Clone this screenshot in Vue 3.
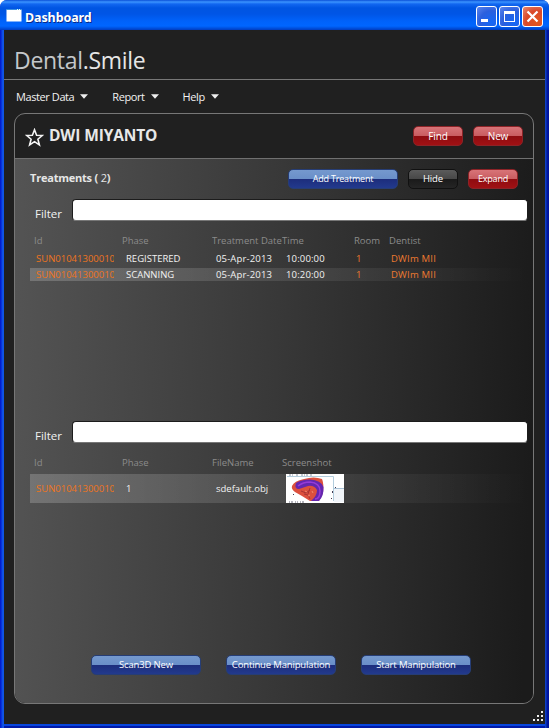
<script setup>
const menus = ['Master Data', 'Report', 'Help']
const treatments = [
  { id: 'SUN01041300010', phase: 'REGISTERED', date: '05-Apr-2013', time: '10:00:00', room: '1', dentist: 'DWIm MII' },
  { id: 'SUN01041300010', phase: 'SCANNING', date: '05-Apr-2013', time: '10:20:00', room: '1', dentist: 'DWIm MII' },
]
const actions = ['Scan3D New', 'Continue Manipulation', 'Start Manipulation']
</script>

<template>
  <div class="window">
    <header class="titlebar">
      <svg class="app-icon" width="16" height="13" viewBox="0 0 16 13">
        <rect x="0.5" y="1" width="15" height="11.5" fill="#fff" />
        <path d="M0 .5H16" stroke="#3b8fe0" />
        <path d="M11 .5h1M13 .5h1" stroke="#dff" />
      </svg>
      <span class="title">Dashboard</span>
      <div class="controls">
        <span class="ctl"><svg width="21" height="21"><rect x="5" y="13" width="7" height="3" fill="#fff" /></svg></span>
        <span class="ctl"><svg width="21" height="21"><path d="M5 5h11v11H5zM6 8h9v7H6z" fill="#fff" fill-rule="evenodd" /></svg></span>
        <span class="ctl close"><svg width="21" height="21"><path d="M5.5 5.5l10 10M15.5 5.5l-10 10" stroke="#fff" stroke-width="2.2" /></svg></span>
      </div>
    </header>

    <div class="client">
      <div class="brand"><span class="brand-a">Dental</span>.Smile</div>
      <nav class="menu">
        <span v-for="m in menus" :key="m" class="menu-item">
          {{ m }}
          <svg width="8" height="5" viewBox="0 0 8 5"><path d="M0 .3h8L4 4.7z" fill="#eee" /></svg>
        </span>
      </nav>

      <main class="panel">
        <div class="patient">
          <svg class="star" width="19" height="19" viewBox="0 0 19 19">
            <path d="M9.5 1.8L11.600 7.200L17.300 7.500L12.900 11.200L14.400 17L9.500 13.700L4.600 17L6.100 11.200L1.700 7.500L7.400 7.200Z" fill="none" stroke="#f4f4f4" stroke-width="1.6" />
          </svg>
          <h1>DWI MIYANTO</h1>
          <button class="btn red">Find</button>
          <button class="btn red last">New</button>
        </div>

        <div class="content">
          <div class="toolbar">
            <h2>Treatments ( <span>2</span>)</h2>
            <button class="btn blue add">Add Treatment</button>
            <button class="btn dark">Hide</button>
            <button class="btn red expand">Expand</button>
          </div>

          <section class="block">
            <label class="filter"><span>Filter</span><input type="text" /></label>
            <div class="cols head">
              <span>Id</span><span>Phase</span><span>Treatment Date</span><span>Time</span><span>Room</span><span>Dentist</span>
            </div>
            <div v-for="(t, i) in treatments" :key="i" class="cols row" :class="{ selected: i === 1 }">
              <span class="id">{{ t.id }}</span><span>{{ t.phase }}</span><span class="date">{{ t.date }}</span><span class="time">{{ t.time }}</span><span class="link">{{ t.room }}</span><span class="link dentist">{{ t.dentist }}</span>
            </div>
          </section>

          <section class="block">
            <label class="filter"><span>Filter</span><input type="text" /></label>
            <div class="cols head">
              <span>Id</span><span>Phase</span><span>FileName</span><span>Screenshot</span>
            </div>
            <div class="cols row selected tall">
              <span class="id">SUN01041300010</span><span>1</span><span class="file">sdefault.obj</span>
              <svg width="58" height="29" viewBox="0 0 58 29">
                <rect width="58" height="29" fill="#fff" />
                <path d="M1 2.500H47.500V27" fill="none" stroke="#b3cddd" />
                <path d="M48 14.500H58" stroke="#a8c2d6" />
                <rect x="48" y="15" width="10" height="13" fill="#f1f5f9" />
                <path d="M3 1h5M10 1h3M15 1h7M24 1h3" stroke="#8890a0" stroke-dasharray="2 1 1 1" />
                <path d="M3 28h4M9 28h3M14 28h4" stroke="#667" stroke-dasharray="1 1 2 1" />
                <path d="M6 12Q8 7 18 5Q28 2 36 5Q38 9 37 19L33 27H24L16 22L9 18Q5 15 6 12Z" fill="#dc503d" />
                <path d="M10 9Q15 5.500 24 5.500Q35 6 37.500 13Q38 22 33 27H25Q31 22 31 16Q28 11 22 12L13 15Q8 15 10 9Z" fill="#6426ae" />
                <path d="M12 12Q17 8 24 8Q34 9 34 17T29 25" fill="none" stroke="#963bd6" stroke-width="1.500" />
                <path d="M15 17l5 2 4-3M18 20l4 1 2 4M24 14l-2 6" fill="none" stroke="#a73433" />
                <path d="M19 17l2 1M22 22l2-1M26 17l1 2" stroke="#f08a6b" />
                <path d="M7 20h1v1H7zM46 17h1v2h-1zM45 24h1v1h-1zM49 13h1v1h-1z" fill="#443b50" />
              </svg>
            </div>
          </section>

          <footer class="actions">
            <button v-for="a in actions" :key="a" class="btn blue wide">{{ a }}</button>
          </footer>
        </div>
      </main>

      <svg class="grip" width="12" height="12" viewBox="0 0 12 12" fill="#eee">
        <path d="M9 0h2v2H9zM5 4h2v2H5zM9 4h2v2H9zM1 8h2v2H1zM5 8h2v2H5zM9 8h2v2H9z" />
      </svg>
    </div>
  </div>
</template>

<style>
body { margin: 0; background: #fff; overflow: hidden; }
</style>

<style scoped>
* { box-sizing: border-box; }
.window {
  width: 549px; height: 728px; display: flex; flex-direction: column;
  border-radius: 7px 7px 0 0; overflow: hidden;
  background: linear-gradient(90deg, #0014c8 0, #0a3de0 2px, #1560ea 3px, #0b4be0 4px, #0b4be0 544px, #0f3cba 546px, #0018a0 547px, #00109c 549px);
  font-family: "Open Sans", "Noto Sans", sans-serif; color: #f2f2f2;
}
.titlebar {
  height: 30px; flex: none; display: flex; align-items: center; padding: 3px 6px 0 6px;
  background: linear-gradient(#0a50d8 0, #3b94ff 2px, #1267f0 4px, #0055e2 8px, #0055e6 14px, #0062fa 21px, #0066ff 26px, #0052e0 28px, #003cc0 30px);
}
.app-icon { margin: -2px 3px 0 0; }
.title { margin-top: 2px; font: bold 12.500px/16px "Noto Sans", "DejaVu Sans", sans-serif; letter-spacing: -.1px; color: #fff; text-shadow: 1px 1px #0a2a88; }
.controls { margin-left: auto; display: flex; gap: 2px; }
.ctl {
  width: 21px; height: 21px; border: 1px solid #fff; border-radius: 3px; display: flex;
  background: radial-gradient(circle at 75% 80%, #1467f6, #2b5fdd 55%, #5d86ee);
}
.ctl svg { margin: -1px; flex: none; }
.ctl.close { background: radial-gradient(circle at 75% 80%, #e4571e, #d9492a 55%, #e98a72); }
.client {
  flex: 1; margin: 0 4px 4px; background: #202020; display: flex; flex-direction: column;
  box-shadow: 0 2px 0 #0846dd, 0 4px 0 #0019a8; position: relative;
}
.brand { height: 50px; flex: none; border-bottom: 1px solid #777; padding: 13px 0 0 10px; font-size: 23px; line-height: 34px; font-weight: 400; letter-spacing: -.3px; color: #e6e6e6; }
.brand-a { color: #c4c7ca; }
.menu { height: 33px; flex: none; display: flex; padding: 0 0 0 12px; gap: 24px; font-size: 11px; line-height: 34px; letter-spacing: -.41px; }
.menu-item { display: flex; align-items: center; gap: 6px; white-space: nowrap; }
.panel { margin: 0 0 0 10px; width: 520px; height: 591px; flex: none; border: 1px solid #777; border-radius: 11px; display: flex; flex-direction: column; overflow: hidden; }
.patient { height: 45px; flex: none; display: flex; align-items: center; border-bottom: 1px solid #707070; padding: 0 10px; }
.star { margin-top: 3px; }
h1 { margin: -2px auto 0 5px; font-size: 15.500px; line-height: 22px; font-weight: 700; letter-spacing: -.12px; color: #e8e8e8; }
.btn {
  width: 50px; height: 20px; padding: 0; border-radius: 5px; border: 1px solid; color: #fff; white-space: nowrap;
  font: 500 9.500px/16px "Open Sans", "Noto Sans", sans-serif; letter-spacing: -.15px; text-align: center;
}
.patient .btn { font-size: 10px; }
.red { background: linear-gradient(#d87478, #c95d61 48%, #8e0c10 50%, #a01114); border-color: #8c2327; }
.blue { background: linear-gradient(#7599ce, #6a8fc8 48%, #1d2d7c 50%, #223a8d); border-color: #263d75; }
.dark { background: linear-gradient(#5b5b5b, #484848 48%, #1a1a1a 50%, #252525); border-color: #111; }
.last { margin-left: 10px; }
.content { flex: 1; display: flex; flex-direction: column; background: linear-gradient(92deg, #545454, #383838 50%, #1b1b1b 98%); }
.toolbar { display: flex; height: 36px; align-items: center; padding: 4px 15px 0 15px; gap: 10px; }
h2 { margin: -2px auto 0 0; font-size: 11px; font-weight: 700; letter-spacing: -.22px; line-height: 16px; color: #e6e6e6; }
h2 span { font-weight: 400; }
.btn.add { width: 110px; font-size: 9px; letter-spacing: -.2px; }
.btn.expand { font-size: 9px; letter-spacing: -.2px; }
.block { height: 222px; flex: none; padding: 4px 5px 0 15px; }
.filter { display: flex; height: 22px; align-items: flex-end; }
.filter span { width: 42px; padding-left: 5px; font-size: 11.500px; line-height: 15px; }
.filter input { flex: 1; width: 0; height: 22px; border: 1px solid #1c1c1c; border-bottom-color: #777; border-radius: 4px; background: #fff; padding: 0; outline: none; }
.cols { display: grid; grid-template-columns: 90px 90px 70px 70px 35px 1fr; white-space: nowrap; align-items: center; }
.head { padding-left: 4px; grid-template-columns: 88px 90px 70px 72px 35px 1fr; height: 18px; margin-top: 11px; color: #8b8b8b; font-size: 9.500px; line-height: 18px; }
.head span { overflow: hidden; }
.row { height: 13px; margin-top: 2px; padding-left: 6px; font-size: 9.500px; line-height: 13px; font-weight: 500; }
.row + .row { margin-top: 3px; }
.row .id { width: 78px; overflow: hidden; color: #ee7420; }
.date, .time { letter-spacing: .15px; }
.dentist { letter-spacing: .2px; }
.link { color: #ee7a30; }
.selected { background: linear-gradient(90deg, rgba(255,255,255,.2), rgba(255,255,255,0)); }
.tall { height: 29px; }
.actions { margin-top: auto; display: flex; gap: 25px; padding: 0 0 28px 76px; }
.wide { width: 110px; }
.grip { position: absolute; right: 1px; bottom: 1px; }
</style>
